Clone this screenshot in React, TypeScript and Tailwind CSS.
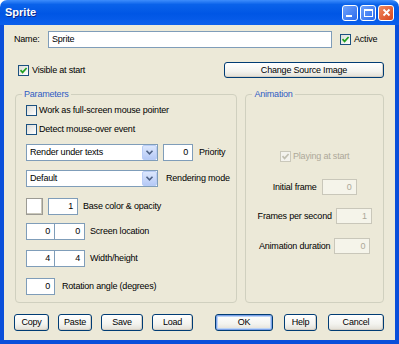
import type { ReactNode } from 'react';

/**
 * Sprite properties dialog - Windows XP (Luna) look
 */

interface CheckProps {
  checked?: boolean;
  disabled?: boolean;
}

function Check({ checked, disabled }: CheckProps) {
  return (
    <span
      className={
        disabled
          ? 'w-[11px] h-[11px] shrink-0 border border-[#CAC8BB] bg-[#F4F3EE] flex items-center justify-center'
          : 'w-[11px] h-[11px] shrink-0 border border-[#1C5180] bg-[linear-gradient(135deg,#DCDCD7,#FFFFFF)] flex items-center justify-center'
      }
    >
      {checked && (
        <svg width="9" height="9" viewBox="0 0 9 9">
          <path
            d="M1.5 4.2 L3.6 6.4 L7.6 2"
            fill="none"
            stroke={disabled ? '#C2C0B2' : '#21A121'}
            strokeWidth="1.7"
          />
        </svg>
      )}
    </span>
  );
}

function XpButton({ children, className, isDefault }: { children: ReactNode; className: string; isDefault?: boolean }) {
  return (
    <div
      className={
        (isDefault
          ? 'shadow-[inset_0_0_0_1px_#7DA2E8,inset_0_0_0_2px_#BCD4F6] '
          : 'shadow-[inset_-1px_-1px_0_#D6D0C5] ') +
        'h-full rounded-[3px] border border-[#003C74] bg-[linear-gradient(to_bottom,#FFFFFF,#F3F3EF_60%,#E2DFD5)] flex items-center justify-center ' +
        className
      }
    >
      {children}
    </div>
  );
}

function NumBox({ value, className, disabled }: { value: string; className: string; disabled?: boolean }) {
  return (
    <div
      className={
        (disabled
          ? 'border-[#C9C7BA] text-[#ACA899] bg-[#F5F4EA] '
          : 'border-[#7F9DB9] bg-white ') +
        'h-full border flex items-center justify-end pr-[4px] ' +
        className
      }
    >
      {value}
    </div>
  );
}

function Combo({ value }: { value: string }) {
  return (
    <div className="w-[132px] h-full border border-[#7F9DB9] bg-white flex items-stretch">
      <span className="flex-1 pl-[3px] flex items-center">{value}</span>
      <span className="w-[15px] border border-[#B9CDF6] rounded-[2px] bg-[linear-gradient(to_bottom,#DCE7FD,#B6CAF6)] flex items-center justify-center">
        <svg width="9" height="7" viewBox="0 0 9 7">
          <path d="M1.5 1.8 L4.5 4.8 L7.5 1.8" fill="none" stroke="#4D6185" strokeWidth="1.6" />
        </svg>
      </span>
    </div>
  );
}

function TitleBar() {
  return (
    <div className="h-[25px] shrink-0 rounded-t-[7px] bg-[linear-gradient(to_bottom,#3E8DFC_0%,#0A62EA_18%,#0056E5_55%,#0B5FEC_100%)] flex items-center pl-[5px] pr-[5px]">
      <span className="text-white font-bold text-[11px] tracking-normal [text-shadow:1px_1px_0_#0A2A8C]">Sprite</span>
      <div className="ml-auto flex gap-[2px]">
        {/* Minimize */}
        <span className="w-[16px] h-[16px] rounded-[3px] border border-white bg-[linear-gradient(135deg,#6FA2FB,#2C6BEE)] flex items-end pl-[3px] pb-[3px]">
          <span className="w-[6px] h-[2px] bg-white" />
        </span>
        {/* Maximize */}
        <span className="w-[16px] h-[16px] rounded-[3px] border border-white bg-[linear-gradient(135deg,#6FA2FB,#2C6BEE)] flex items-center justify-center">
          <span className="w-[9px] h-[8px] border border-white border-t-2" />
        </span>
        {/* Close */}
        <span className="w-[16px] h-[16px] rounded-[3px] border border-white bg-[linear-gradient(135deg,#F08A60,#D8451C)] flex items-center justify-center">
          <svg width="9" height="9" viewBox="0 0 9 9">
            <path d="M1.5 1.5 L7.5 7.5 M7.5 1.5 L1.5 7.5" stroke="#FFFFFF" strokeWidth="1.8" />
          </svg>
        </span>
      </div>
    </div>
  );
}

export default function App() {
  return (
    <div className="w-[399px] h-[344px] flex flex-col font-['Liberation_Sans',Arial,sans-serif] text-[9px] tracking-[-0.2px] leading-[11px] text-black">
      <TitleBar />

      <div className="flex-1 flex flex-col bg-[#ECE9D8] border-x-4 border-b-4 border-[#0A4FDA] pl-[10px] pr-[11px]">
        {/* Name */}
        <div className="mt-[6px] h-[17px] flex items-center">
          <span className="w-[34px]">Name:</span>
          <div className="w-[284px] h-full border border-[#7F9DB9] bg-white flex items-center pl-[3px]">Sprite</div>
          <span className="ml-[8px]">
            <Check checked />
          </span>
          <span className="ml-[3px]">Active</span>
        </div>

        {/* Visible / source image */}
        <div className="mt-[14px] h-[16px] flex items-center">
          <span className="ml-[4px]">
            <Check checked />
          </span>
          <span className="ml-[3px]">Visible at start</span>
          <XpButton className="ml-auto w-[160px]">Change Source Image</XpButton>
        </div>

        {/* Groups */}
        <div className="mt-[11px] pl-[1px] flex gap-[8px]">
          <fieldset className="w-[223px] h-[214px] border border-[#D0D0BF] rounded-[4px]">
            <legend className="ml-[6px] px-[2px] text-[#2F5BC4]">Parameters</legend>
            <div className="pl-[10px] flex flex-col">
              <div className="mt-[5px] h-[11px] flex items-center">
                <Check />
                <span className="ml-[2px]">Work as full-screen mouse pointer</span>
              </div>
              <div className="mt-[8px] h-[11px] flex items-center">
                <Check />
                <span className="ml-[2px]">Detect mouse-over event</span>
              </div>
              <div className="mt-[9px] h-[17px] flex items-center">
                <Combo value="Render under texts" />
                <NumBox value="0" className="ml-[5px] w-[30px]" />
                <span className="ml-[6px]">Priority</span>
              </div>
              <div className="mt-[9px] h-[17px] flex items-center">
                <Combo value="Default" />
                <span className="ml-[8px]">Rendering mode</span>
              </div>
              <div className="mt-[11px] h-[17px] flex items-center">
                <span className="w-[17px] h-full border border-[#9C9B94] bg-white shadow-[inset_-1px_-1px_0_#C9C7BA,inset_1px_1px_0_#FFFFFF]" />
                <NumBox value="1" className="ml-[5px] w-[30px]" />
                <span className="ml-[5px]">Base color &amp; opacity</span>
              </div>
              <div className="mt-[8px] h-[17px] flex items-center">
                <NumBox value="0" className="w-[29px]" />
                <NumBox value="0" className="-ml-px w-[31px]" />
                <span className="ml-[5px]">Screen location</span>
              </div>
              <div className="mt-[10px] h-[17px] flex items-center">
                <NumBox value="4" className="w-[29px]" />
                <NumBox value="4" className="-ml-px w-[31px]" />
                <span className="ml-[5px]">Width/height</span>
              </div>
              <div className="mt-[11px] h-[17px] flex items-center">
                <NumBox value="0" className="w-[29px]" />
                <span className="ml-[7px]">Rotation angle (degrees)</span>
              </div>
            </div>
          </fieldset>

          <fieldset className="w-[139px] h-[214px] border border-[#D0D0BF] rounded-[4px]">
            <legend className="ml-[6px] px-[2px] text-[#2F5BC4]">Animation</legend>
            <div className="flex flex-col items-center text-[#ACA899]">
              <div className="mt-[51px] h-[11px] flex items-center">
                <Check checked disabled />
                <span className="ml-[2px]">Playing at start</span>
              </div>
              <div className="mt-[17px] h-[16px] flex items-center text-black">
                <span>Initial frame</span>
                <NumBox value="0" disabled className="ml-[5px] w-[35px]" />
              </div>
              <div className="mt-[13px] h-[16px] flex items-center text-black">
                <span>Frames per second</span>
                <NumBox value="1" disabled className="ml-[4px] w-[36px]" />
              </div>
              <div className="mt-[14px] h-[16px] flex items-center text-black">
                <span>Animation duration</span>
                <NumBox value="0" disabled className="ml-[4px] w-[36px]" />
              </div>
            </div>
          </fieldset>
        </div>

        {/* Bottom buttons */}
        <div className="mt-[11px] h-[17px] flex">
          <XpButton className="w-[35px]">Copy</XpButton>
          <XpButton className="ml-[9px] w-[34px]">Paste</XpButton>
          <XpButton className="ml-[9px] w-[42px]">Save</XpButton>
          <XpButton className="ml-[9px] w-[41px]">Load</XpButton>
          <XpButton isDefault className="ml-[22px] w-[58px]">OK</XpButton>
          <XpButton className="ml-[11px] w-[33px]">Help</XpButton>
          <XpButton className="ml-[11px] w-[56px]">Cancel</XpButton>
        </div>
      </div>
    </div>
  );
}
